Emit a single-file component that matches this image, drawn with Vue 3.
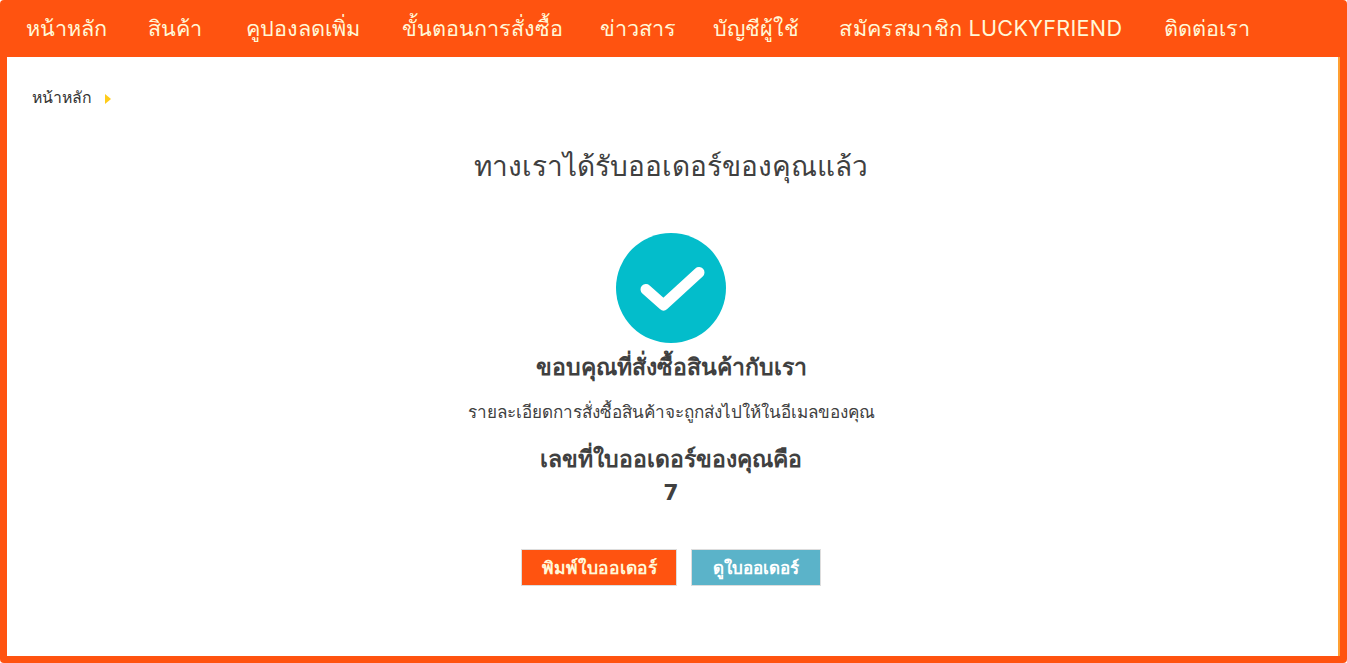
<template>
  <div class="page">
    <nav class="menu">
      <a
        v-for="item in menu"
        :key="item.label"
        class="menu-item"
        :class="{ wide: item.wide }"
        :style="{ width: item.width + 'px' }"
      >{{ item.label }}</a>
    </nav>
    <main class="content">
      <div class="crumbs">
        <span>หน้าหลัก</span>
        <i class="crumb-arrow"></i>
      </div>
      <div class="inner">
        <h1 class="title">ทางเราได้รับออเดอร์ของคุณแล้ว</h1>
        <div class="check">
          <svg width="110" height="110" viewBox="0 0 110 110">
            <circle cx="55" cy="55" r="55" fill="#03bdcb" />
            <path d="M30 56.5 L47.5 72 L83 39.5" fill="none" stroke="#fff" stroke-width="11" stroke-linecap="round" stroke-linejoin="round" />
          </svg>
        </div>
        <h2 class="thanks">ขอบคุณที่สั่งซื้อสินค้ากับเรา</h2>
        <p class="detail">รายละเอียดการสั่งซื้อสินค้าจะถูกส่งไปให้ในอีเมลของคุณ</p>
        <h2 class="order-label">เลขที่ใบออเดอร์ของคุณคือ</h2>
        <div class="order-no">7</div>
        <div class="actions">
          <button class="btn btn-print">พิมพ์ใบออเดอร์</button>
          <button class="btn btn-view">ดูใบออเดอร์</button>
        </div>
      </div>
    </main>
  </div>
</template>

<script setup>
const menu = [
  { label: 'หน้าหลัก', width: 82 },
  { label: 'สินค้า', width: 53 },
  { label: 'คูปองลดเพิ่ม', width: 120 },
  { label: 'ขั้นตอนการสั่งซื้อ', width: 157 },
  { label: 'ข่าวสาร', width: 70 },
  { label: 'บัญชีผู้ใช้', width: 84 },
  { label: 'สมัครสมาชิก LUCKYFRIEND', width: 283, wide: true },
  { label: 'ติดต่อเรา', width: 86 }
]
</script>

<style>
html, body { margin: 0; padding: 0; background: #fff; overflow: hidden; }
</style>

<style scoped>
.page {
  height: 663px;
  box-sizing: border-box;
  padding: 0 7px 7px 7px;
  background: #ff5310;
  border-radius: 4px;
  font-family: "Noto Sans", "Open Sans", sans-serif;
  color: #404040;
  display: flex;
  flex-direction: column;
}
.menu {
  height: 57px;
  display: flex;
  align-items: center;
  gap: 41.4px;
  padding-left: 18px;
  flex: none;
  font-family: Inter, "Noto Sans", sans-serif;
}
.menu-item {
  color: #fff8d8;
  font-size: 21.6px;
  white-space: nowrap;
  display: flex;
  justify-content: center;
}
.menu-item.wide { letter-spacing: 0.3px; }
.content {
  flex: 1;
  background: #fff;
  border-right: 2px solid #ffa033;
  display: flex;
  flex-direction: column;
}
.crumbs {
  display: flex;
  align-items: center;
  gap: 13px;
  padding: 28px 0 0 25px;
  height: 24px;
  font-size: 15.8px;
  color: #333;
}
.crumb-arrow {
  border-left: 6px solid #ffcc1a;
  border-top: 5px solid transparent;
  border-bottom: 5px solid transparent;
  margin-top: 3px;
}
.inner {
  display: flex;
  flex-direction: column;
  align-items: center;
  padding-right: 3px;
}
.title { margin: 36px 0 0; font-size: 28px; font-weight: 400; line-height: 40px; color: #404040; }
.check { margin-top: 48px; height: 110px; }
.check svg { display: block; }
.thanks, .order-label { margin: 0; font-size: 23px; font-weight: 700; line-height: 30px; color: #404040; }
.thanks { margin-top: 8px; }
.detail { margin: 19px 0 0; font-size: 17.1px; line-height: 24px; color: #404040; }
.order-label { margin-top: 19px; }
.order-no { font-family: "DejaVu Sans", sans-serif; font-size: 22px; font-weight: 700; line-height: 32px; margin-top: 4px; }
.actions { display: flex; gap: 14px; margin-top: 40px; }
.btn {
  height: 37px;
  padding: 0;
  font-family: inherit;
  font-size: 17.5px;
  font-weight: 700;
  color: #fff;
  border: 1px solid #ddd;
}
.btn-print { width: 156px; background: #ff5310; color: #fff8d8; }
.btn-view { width: 130px; background: #5bb3c9; font-size: 17px; }
</style>
